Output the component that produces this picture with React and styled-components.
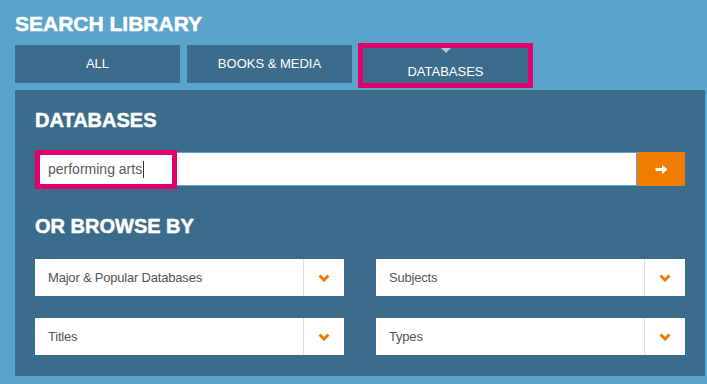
import React from "react";
import styled, { createGlobalStyle } from "styled-components";

const GlobalStyle = createGlobalStyle`
  html, body {
    margin: 0;
    padding: 0;
    background: #5aa4cb;
    font-family: "Liberation Sans", Arial, sans-serif;
  }
`;

const Page = styled.div`
  min-height: 384px;
  padding: 12px 0 0 15px;
  box-sizing: border-box;
  background: #5aa4cb;
`;

const Title = styled.h1`
  margin: 0;
  font-size: 21px;
  line-height: 24px;
  font-weight: 700;
  color: #fff;
  -webkit-text-stroke: 0.5px #fff;
`;

const Tabs = styled.div`
  display: flex;
  align-items: flex-start;
  gap: 7px;
  margin-top: 9px;
  height: 45px;
`;

const Tab = styled.div`
  position: relative;
  width: 165px;
  height: ${(p) => (p.$active ? "35px" : "38px")};
  margin-top: ${(p) => (p.$active ? "3px" : "0")};
  margin-left: ${(p) => (p.$active ? "4px" : "0")};
  box-sizing: border-box;
  padding-top: ${(p) => (p.$active ? "16px" : "0")};
  display: flex;
  justify-content: center;
  align-items: ${(p) => (p.$active ? "flex-start" : "center")};
  background: #3c6c8b;
  color: #fff;
  font-size: 13px;
  line-height: 16px;
  outline: ${(p) => (p.$active ? "5px solid #e0006e" : "none")};
`;

const Pointer = styled.span`
  position: absolute;
  top: 0;
  left: 50%;
  margin-left: -5px;
  width: 0;
  height: 0;
  border-left: 5px solid transparent;
  border-right: 5px solid transparent;
  border-top: 5px solid #b4c6d3;
`;

const Panel = styled.div`
  width: 690px;
  box-sizing: border-box;
  padding: 18px 20px 21px 20px;
  background: #3c6c8b;
`;

const Heading = styled.h2`
  margin: ${(p) => p.$margin || "0"};
  font-size: 20px;
  line-height: 24px;
  font-weight: 700;
  color: #fff;
  -webkit-text-stroke: 0.5px #fff;
`;

const SearchRow = styled.div`
  display: flex;
  height: 34px;
  margin-top: 20px;
`;

const SearchField = styled.div`
  position: relative;
  flex: 1;
  display: flex;
  align-items: center;
  padding-left: 12px;
  background: #fff;
  border: 1px solid #5aa4d8;
  font-size: 14px;
  color: #5a5a5a;
`;

const Caret = styled.span`
  display: inline-block;
  width: 1px;
  height: 17px;
  margin-left: 1px;
  background: #333;
`;

const Highlight = styled.span`
  position: absolute;
  left: -1px;
  top: -3px;
  width: 132px;
  height: 29px;
  border: 5px solid #e0006e;
`;

const GoButton = styled.button`
  width: 48px;
  border: none;
  padding: 0;
  display: flex;
  align-items: center;
  justify-content: center;
  background: #f07d00;
`;

const Grid = styled.div`
  display: grid;
  grid-template-columns: 1fr 1fr;
  column-gap: 32px;
  row-gap: 22px;
  margin-top: 21px;
`;

const Select = styled.div`
  display: flex;
  height: 37px;
  background: #fff;
`;

const SelectLabel = styled.div`
  flex: 1;
  display: flex;
  align-items: center;
  padding-left: 13px;
  font-size: 13px;
  letter-spacing: -0.2px;
  color: #555;
`;

const SelectToggle = styled.div`
  width: 40px;
  display: flex;
  align-items: center;
  justify-content: center;
  border-left: 1px solid #dcdcdc;
`;

const Arrow = () => (
  <svg width="13" height="11" viewBox="0 0 13 11">
    <path d="M0.5 4 H7 V0.8 L12.5 5.5 L7 10.2 V7 H0.5 Z" fill="#fff" />
  </svg>
);

const Chevron = () => (
  <svg width="12" height="8" viewBox="0 0 12 8">
    <polyline
      points="1.5,1.5 6,6 10.5,1.5"
      fill="none"
      stroke="#f07d00"
      strokeWidth="3"
    />
  </svg>
);

const selects = ["Major & Popular Databases", "Subjects", "Titles", "Types"];

export default function App() {
  return (
    <Page>
      <GlobalStyle />
      <Title>SEARCH LIBRARY</Title>
      <Tabs>
        <Tab>ALL</Tab>
        <Tab>BOOKS &amp; MEDIA</Tab>
        <Tab $active>
          <Pointer />
          DATABASES
        </Tab>
      </Tabs>
      <Panel>
        <Heading>DATABASES</Heading>
        <SearchRow>
          <SearchField>
            performing arts
            <Caret />
            <Highlight />
          </SearchField>
          <GoButton>
            <Arrow />
          </GoButton>
        </SearchRow>
        <Heading $margin="28px 0 0">OR BROWSE BY</Heading>
        <Grid>
          {selects.map((s) => (
            <Select key={s}>
              <SelectLabel>{s}</SelectLabel>
              <SelectToggle>
                <Chevron />
              </SelectToggle>
            </Select>
          ))}
        </Grid>
      </Panel>
    </Page>
  );
}
